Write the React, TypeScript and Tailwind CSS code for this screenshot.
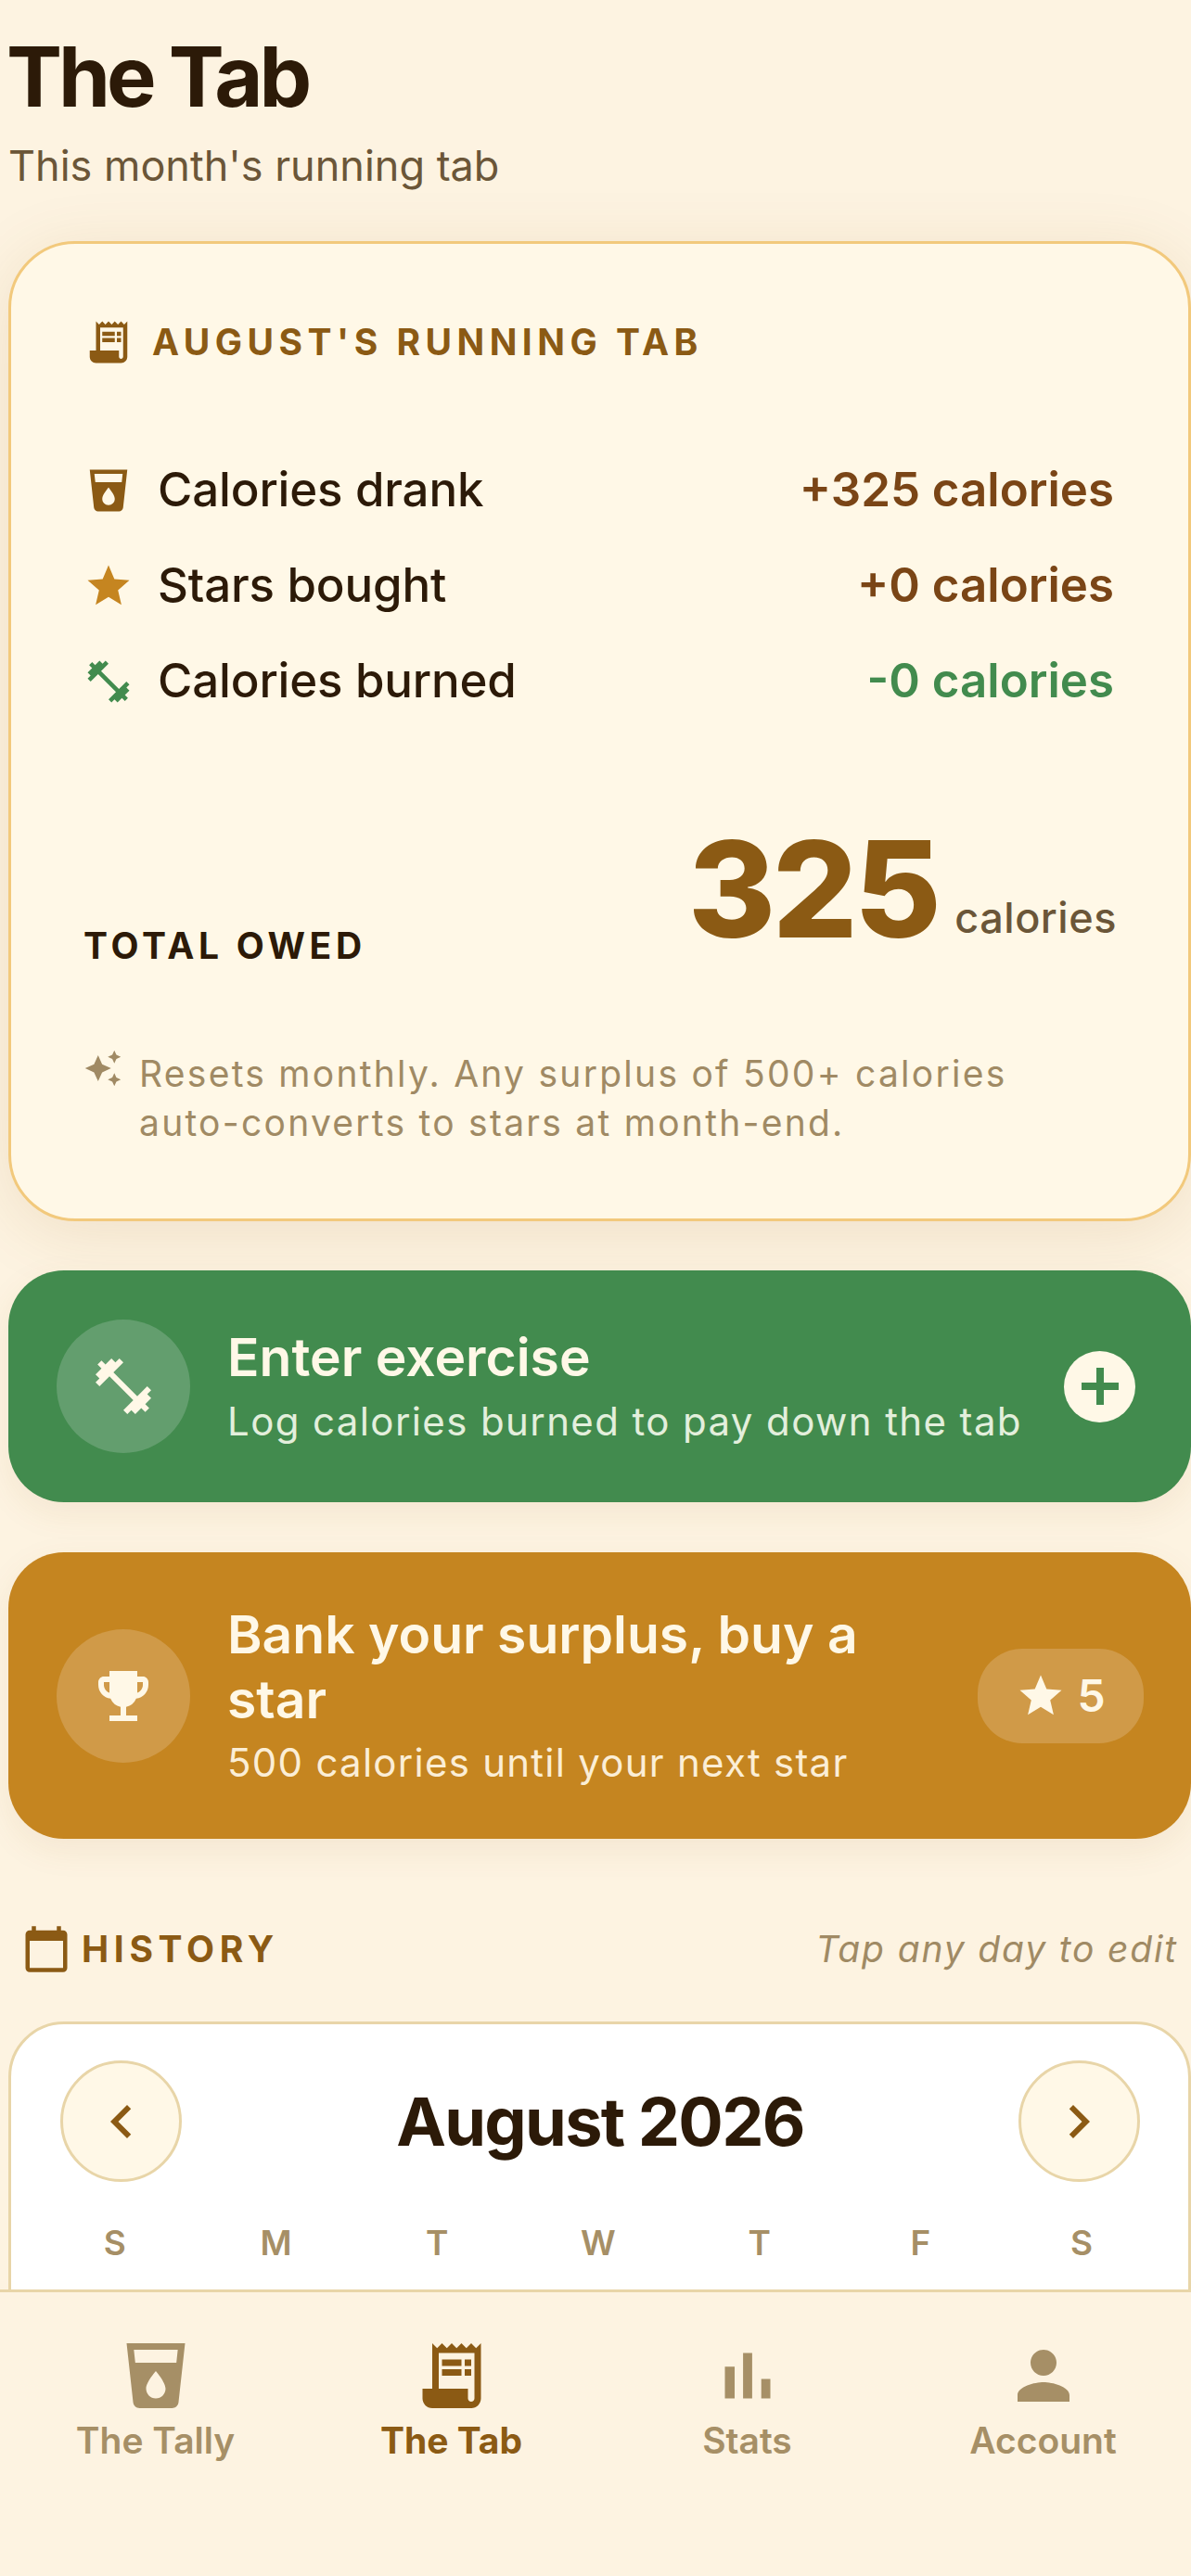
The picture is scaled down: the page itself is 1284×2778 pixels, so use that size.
import { MdAutoAwesome, MdCalendarToday, MdChevronLeft, MdChevronRight, MdEmojiEvents, MdFitnessCenter, MdLocalDrink, MdPerson, MdReceiptLong, MdStar } from "react-icons/md"

function BarsIcon() {
  return (
    <svg viewBox="0 0 24 24" width="1em" height="1em" fill="currentColor">
      <path d="M5 9.2h3V19H5zM10.6 5h2.8v14h-2.8zm5.6 8H19v6h-2.8z" />
    </svg>
  )
}

const rows = [
  { label: "Calories drank", value: "+325 calories", color: "text-[#7a4516]", icon: <MdLocalDrink className="text-[54px] text-[#8b5a14]" /> },
  { label: "Stars bought", value: "+0 calories", color: "text-[#7a4516]", icon: <MdStar className="text-[54px] text-[#c58520]" /> },
  { label: "Calories burned", value: "-0 calories", color: "text-[#428b4e]", icon: <MdFitnessCenter className="text-[54px] text-[#428b4e]" /> },
]

const tabs = [
  { label: "The Tally", icon: <MdLocalDrink />, active: false },
  { label: "The Tab", icon: <MdReceiptLong />, active: true },
  { label: "Stats", icon: <BarsIcon />, active: false },
  { label: "Account", icon: <MdPerson />, active: false },
]

const weekdays = ["S", "M", "T", "W", "T", "F", "S"]

function TabCard() {
  return (
    <section className="mt-[51px] rounded-[72px] border-[3px] border-[#f2c97c] bg-[#fff8e7] pb-[77px] pl-[78px] pr-[80px] pt-[79px] shadow-[0_12px_72px_rgba(139,90,20,0.12)]">
      <div className="flex items-center gap-[20px]">
        <MdReceiptLong className="text-[54px] text-[#8b5a14] shrink-0" />
        <span className="text-[39px] font-bold tracking-[0.14em] leading-[54px] text-[#8b5a14]">AUGUST'S RUNNING TAB</span>
      </div>

      <div className="mt-[81px] flex flex-col">
        {rows.map((row) => (
          <div key={row.label} className="flex h-[103px] items-center justify-between">
            <div className="flex items-center gap-[26px]">
              {row.icon}
              <span className="text-[51px] font-medium tracking-[-0.003em] text-[#2c1a08]">{row.label}</span>
            </div>
            <span className={`text-[51px] font-semibold ${row.color}`}>{row.value}</span>
          </div>
        ))}
      </div>

      <div className="mt-[86px] flex items-end justify-between">
        <span className="-mb-[3px] text-[39px] font-bold tracking-[0.12em] text-[#2c1a08]">TOTAL OWED</span>
        <div className="-mr-[3px]">
          <span className="text-[144px] font-extrabold leading-[174px] tracking-[-0.025em] text-[#8b5a14]">325</span>
          <span className="ml-[18px] align-[5px] text-[45px] font-medium tracking-[0.012em] text-[#6b5638]">calories</span>
        </div>
      </div>

      <div className="mt-[85px] flex items-start gap-[18px]">
        <MdAutoAwesome className="text-[42px] text-[#a08a64] shrink-0" />
        <p className="text-[39px] leading-[53px] tracking-[0.058em] text-[#a08a64]">
          Resets monthly. Any surplus of 500+ calories
          <br />
          auto-converts to stars at month-end.
        </p>
      </div>
    </section>
  )
}

function ExerciseCard() {
  return (
    <button className="mt-[53px] flex h-[250px] w-full items-center rounded-[60px] bg-[#428b4e] pl-[52px] pr-[60px] text-left shadow-[0_12px_36px_rgba(139,90,20,0.08)]">
      <div className="flex size-[144px] shrink-0 items-center justify-center rounded-full bg-[#639e6e]">
        <MdFitnessCenter className="text-[72px] text-[#fff8e7]" />
      </div>
      <div className="ml-[40px] flex-1">
        <div className="text-[57px] font-semibold leading-[70px] text-[#fff8e7]">Enter exercise</div>
        <div className="mt-[6px] text-[42px] leading-[56px] tracking-[0.033em] text-[#e3efdc]">Log calories burned to pay down the tab</div>
      </div>
      <div className="flex size-[77px] shrink-0 items-center justify-center rounded-full bg-[#fff8e7]">
        <svg viewBox="0 0 40 40" width="40" height="40" fill="#428b4e">
          <path d="M16 0h8v16h16v8H24v16h-8V24H0v-8h16z" />
        </svg>
      </div>
    </button>
  )
}

function SurplusCard() {
  return (
    <button className="mt-[54px] flex h-[309px] w-full items-center rounded-[60px] bg-[#c58520] pl-[52px] pr-[51px] text-left shadow-[0_12px_36px_rgba(139,90,20,0.08)]">
      <div className="flex size-[144px] shrink-0 items-center justify-center rounded-full bg-[#d09a48]">
        <MdEmojiEvents className="text-[72px] text-[#fff8e7]" />
      </div>
      <div className="ml-[40px] flex-1">
        <div className="text-[57px] font-semibold leading-[70px] text-[#fff8e7]">
          Bank your surplus, buy a
          <br />
          star
        </div>
        <div className="mt-[5px] text-[42px] leading-[56px] tracking-[0.03em] text-[#fbeed6]">500 calories until your next star</div>
      </div>
      <div className="flex h-[102px] w-[179px] shrink-0 items-center justify-center gap-[12px] rounded-[48px] bg-[#d09a48]">
        <MdStar className="text-[54px] text-[#fff8e7]" />
        <span className="text-[48px] font-semibold text-[#fff8e7]">5</span>
      </div>
    </button>
  )
}

function HistoryCard() {
  return (
    <section className="mt-[51px] rounded-[60px] border-[3px] border-[#e8d5a8] bg-white pb-[120px] pl-[53px] pr-[52px] pt-[39px]">
      <div className="flex items-center justify-between">
        <button className="flex size-[131px] items-center justify-center rounded-full border-[3px] border-[#e8d5a8] bg-[#fff8e7]">
          <MdChevronLeft className="text-[72px] text-[#8b5a14]" />
        </button>
        <span className="text-[72px] font-bold tracking-[-0.024em] text-[#2c1a08]">August 2026</span>
        <button className="flex size-[131px] items-center justify-center rounded-full border-[3px] border-[#e8d5a8] bg-[#fff8e7]">
          <MdChevronRight className="text-[72px] text-[#8b5a14]" />
        </button>
      </div>
      <div className="-ml-[28px] -mr-[24px] mt-[39px] grid grid-cols-7">
        {weekdays.map((day, i) => (
          <div key={i} className="text-center text-[37px] font-semibold leading-[54px] text-[#a68f66]">
            {day}
          </div>
        ))}
      </div>
    </section>
  )
}

export default function App() {
  return (
    <div className="flex h-[2778px] w-[1284px] flex-col overflow-hidden bg-[#fdf3e1] font-['Inter',sans-serif]">
      <main className="min-h-0 flex-1 overflow-hidden pl-[9px]">
        <h1 className="-ml-[2px] pt-[29px] text-[90px] font-bold leading-[108px] tracking-[-0.045em] text-[#2c1a08]">The Tab</h1>
        <p className="mt-[12px] text-[45px] leading-[60px] text-[#6b5638]">This month's running tab</p>

        <TabCard />
        <ExerciseCard />
        <SurplusCard />

        <div className="mt-[92px] flex h-[54px] items-center justify-between pl-[14px] pr-[14px]">
          <div className="flex items-center gap-[11px]">
            <MdCalendarToday className="text-[54px] text-[#8b5a14]" />
            <span className="text-[39px] font-bold tracking-[0.145em] text-[#8b5a14]">HISTORY</span>
          </div>
          <span className="text-[39px] italic tracking-[0.047em] text-[#a08a64]">Tap any day to edit</span>
        </div>

        <HistoryCard />
      </main>

      <nav className="grid h-[309px] shrink-0 grid-cols-4 border-t-[3px] border-[#e8d5a8] bg-[#fdf3e1] pl-[8px] pt-[48px]">
        {tabs.map((tab) => (
          <div key={tab.label} className={`flex flex-col items-center ${tab.active ? "text-[#8b5a14]" : "text-[#a68f66]"}`}>
            <span className="text-[84px] leading-none">{tab.icon}</span>
            <span className={`mt-[1px] text-[39px] leading-[54px] ${tab.active ? "font-bold" : "font-semibold"}`}>{tab.label}</span>
          </div>
        ))}
      </nav>
    </div>
  )
}
